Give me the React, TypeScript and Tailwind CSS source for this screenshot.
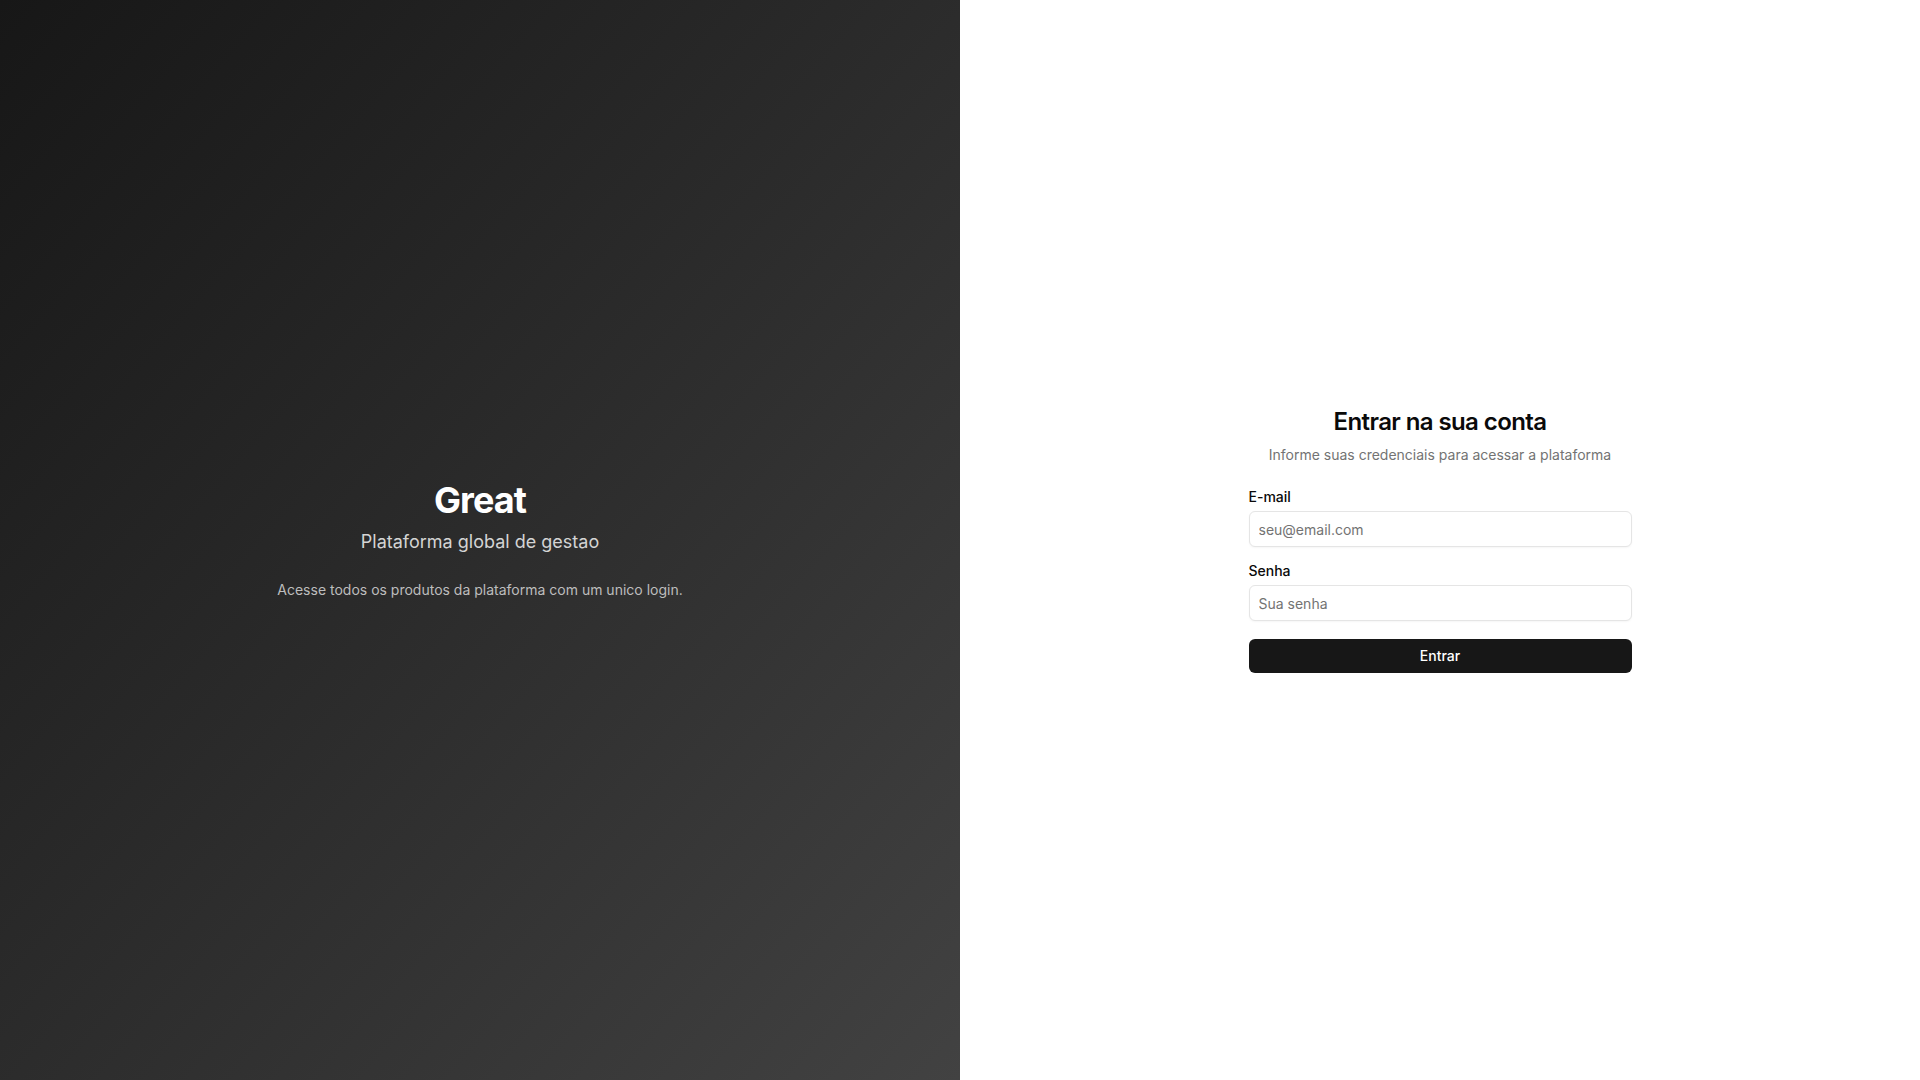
import React from "react";

export default function App() {
  return (
    <div
      className="flex h-screen w-full"
      style={{ fontFamily: "Inter, 'Noto Sans', sans-serif" }}
    >
      <div className="flex w-1/2 flex-col items-center justify-center bg-gradient-to-br from-[#171717] to-[#424242] text-center">
        <h1 className="text-4xl font-bold leading-10 tracking-tight text-white">Great</h1>
        <p className="mt-2 text-lg leading-7 text-[#d4d4d4]">Plataforma global de gestao</p>
        <p className="mt-6 text-sm leading-5 text-[#bdbdbd]">
          Acesse todos os produtos da plataforma com um unico login.
        </p>
      </div>
      <div className="flex w-1/2 items-center justify-center bg-white">
        <div className="w-[383px]">
          <div className="text-center">
            <h2 className="text-2xl font-semibold leading-[30px] tracking-tight text-[#0a0a0a]">
              Entrar na sua conta
            </h2>
            <p className="mt-2 text-sm leading-5 text-[#737373]">
              Informe suas credenciais para acessar a plataforma
            </p>
          </div>
          <form className="mt-[22px]" onSubmit={(e) => e.preventDefault()}>
            <label className="block text-sm font-medium leading-5 text-[#0a0a0a]">E-mail</label>
            <input
              type="email"
              placeholder="seu@email.com"
              className="mt-1 block h-9 w-full rounded-md border border-[#e5e5e5] bg-white px-[9px] text-sm text-[#0a0a0a] shadow-[0_1px_2px_rgba(0,0,0,0.04)] outline-none placeholder:text-[#737373]"
            />
            <label className="mt-3.5 block text-sm font-medium leading-5 text-[#0a0a0a]">Senha</label>
            <input
              type="password"
              placeholder="Sua senha"
              className="mt-1 block h-9 w-full rounded-md border border-[#e5e5e5] bg-white px-[9px] text-sm text-[#0a0a0a] shadow-[0_1px_2px_rgba(0,0,0,0.04)] outline-none placeholder:text-[#737373]"
            />
            <button
              type="submit"
              className="mt-[18px] flex h-[34px] w-full items-center justify-center rounded-md bg-[#171717] text-sm font-medium text-white"
            >
              Entrar
            </button>
          </form>
        </div>
      </div>
    </div>
  );
}
